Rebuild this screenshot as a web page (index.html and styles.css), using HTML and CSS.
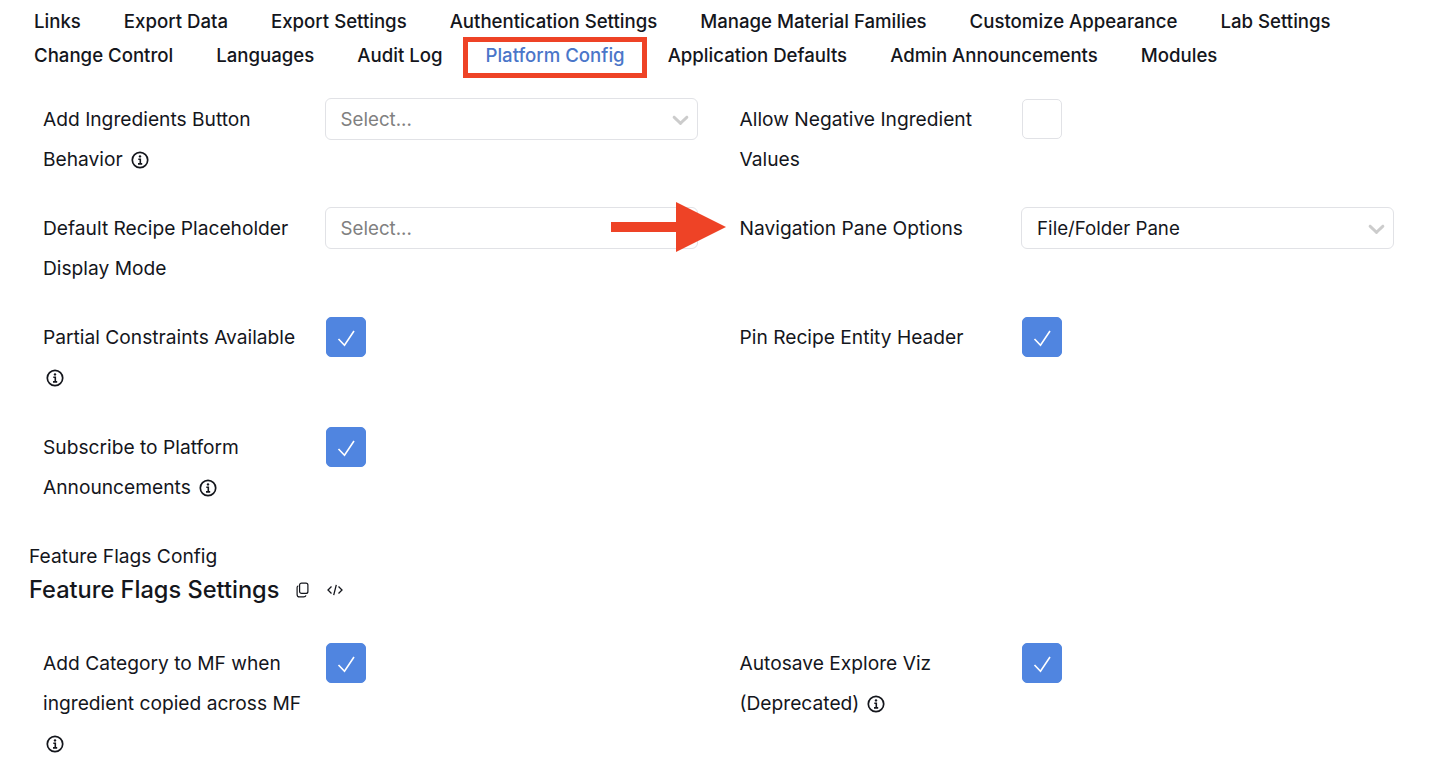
FILE: index.html
```html
<!DOCTYPE html>
<html lang="en">
<head>
  <meta charset="UTF-8" />
  <meta name="viewport" content="width=device-width, initial-scale=1" />
  <title>Platform Config</title>
  <link rel="stylesheet" href="styles.css">
</head>
<body>

<svg width="0" height="0" class="defs">
  <symbol id="info" viewBox="0 0 18 18">
    <circle cx="9" cy="9" r="7.7" fill="none" stroke="currentColor" stroke-width="1.7" />
    <circle cx="9" cy="5.4" r="1.2" fill="currentColor" />
    <path d="M7.3 8.2H9.3V12.6M7 12.9H11.2" fill="none" stroke="currentColor" stroke-width="1.6" />
  </symbol>
  <symbol id="chevron" viewBox="0 0 20 20">
    <path d="M4.516 7.548c.436-.446 1.043-.481 1.576 0L10 11.295l3.908-3.747c.533-.481 1.141-.446 1.574 0 .436.445.408 1.197 0 1.615-.406.418-4.695 4.502-4.695 4.502a1.095 1.095 0 0 1-1.576 0S4.924 9.581 4.516 9.163c-.409-.418-.436-1.17 0-1.615z" fill="currentColor" />
  </symbol>
  <symbol id="tick" viewBox="0 0 38 38">
    <path d="M11.5 21L17.5 27.3L27 13" fill="none" stroke="#fff" stroke-width="1.6" />
  </symbol>
</svg>

<!-- Admin tabs -->
<nav class="tabs">
  <a class="tab">Links</a>
  <a class="tab">Export Data</a>
  <a class="tab">Export Settings</a>
  <a class="tab">Authentication Settings</a>
  <a class="tab">Manage Material Families</a>
  <a class="tab">Customize Appearance</a>
  <a class="tab">Lab Settings</a>
  <a class="tab">Change Control</a>
  <a class="tab">Languages</a>
  <a class="tab">Audit Log</a>
  <a class="tab tab-active">Platform Config<span class="highlight"></span></a>
  <a class="tab">Application Defaults</a>
  <a class="tab">Admin Announcements</a>
  <a class="tab">Modules</a>
</nav>

<!-- Platform settings -->
<section class="settings">
  <div class="field">
    <label class="field-label">Add Ingredients Button Behavior <svg class="info"><use href="#info" /></svg></label>
    <div class="select placeholder">Select...<svg class="chevron"><use href="#chevron" /></svg></div>
  </div>
  <div class="field">
    <label class="field-label">Allow Negative Ingredient Values</label>
    <div class="checkbox"></div>
  </div>
  <div class="field">
    <label class="field-label">Default Recipe Placeholder Display Mode</label>
    <div class="select placeholder">Select...<svg class="chevron"><use href="#chevron" /></svg></div>
  </div>
  <div class="field">
    <label class="field-label">Navigation Pane Options</label>
    <div class="select">File/Folder Pane<svg class="chevron"><use href="#chevron" /></svg></div>
  </div>
  <div class="field">
    <label class="field-label">Partial Constraints Available <svg class="info"><use href="#info" /></svg></label>
    <div class="checkbox checked"><svg><use href="#tick" /></svg></div>
  </div>
  <div class="field">
    <label class="field-label">Pin Recipe Entity Header</label>
    <div class="checkbox checked"><svg><use href="#tick" /></svg></div>
  </div>
  <div class="field">
    <label class="field-label">Subscribe to Platform Announcements <svg class="info"><use href="#info" /></svg></label>
    <div class="checkbox checked"><svg><use href="#tick" /></svg></div>
  </div>
</section>

<!-- Feature flags -->
<section class="flags">
  <div class="flags-kicker">Feature Flags Config</div>
  <div class="flags-title">
    <h2>Feature Flags Settings</h2>
    <svg class="icon-copy" viewBox="0 0 13 16">
      <rect x="3.6" y="1.1" width="8.3" height="10.3" rx="2" fill="none" stroke="currentColor" stroke-width="1.2" />
      <path d="M2.3 3.8C1.5 4.1 1.1 4.8 1.1 5.6V12.4C1.1 13.9 2 14.9 3.5 14.9H7.7C8.9 14.9 9.7 14.3 10 13.4" fill="none" stroke="currentColor" stroke-width="1.2" />
    </svg>
    <svg class="icon-code" viewBox="0 0 16 16">
      <path d="M4.5 4.5L1 8L4.5 11.5M11.5 4.5L15 8L11.5 11.5M9.3 2.8L6.7 13.2" fill="none" stroke="currentColor" stroke-width="1.3" />
    </svg>
  </div>
</section>

<section class="settings settings-flags">
  <div class="field">
    <label class="field-label">Add Category to MF when ingredient copied across MF <svg class="info"><use href="#info" /></svg></label>
    <div class="checkbox checked"><svg><use href="#tick" /></svg></div>
  </div>
  <div class="field">
    <label class="field-label">Autosave Explore Viz (Deprecated) <svg class="info"><use href="#info" /></svg></label>
    <div class="checkbox checked"><svg><use href="#tick" /></svg></div>
  </div>
</section>

<!-- Red annotation arrow -->
<svg class="arrow" width="116" height="50" viewBox="0 0 116 50">
  <path d="M0 20H65V0L115 25L65 50V30H0Z" fill="#ee4326" />
</svg>

</body>
</html>
```

FILE: styles.css
```css
html, body {
  margin: 0;
  padding: 0;
  height: 760px;
  overflow: hidden;
}

body {
  font-family: Inter, "Noto Sans", sans-serif;
  font-size: 19.2px;
  color: #14161c;
  background: #fff;
  position: relative;
}

.defs {
  position: absolute;
}

.tabs {
  display: flex;
  flex-wrap: wrap;
  width: 1340px;
  padding: 4px 0 0 34px;
  column-gap: 43px;
  font-size: 18.63px;
}
.tab {
  position: relative;
  font-weight: 500;
  line-height: 34px;
  color: #14161c;
}
.tab-active {
  color: #4a76c9;
}
.highlight {
  position: absolute;
  left: -22.5px;
  right: -22.5px;
  top: -1px;
  bottom: -6px;
  border: 5px solid #ee4326;
}

.settings {
  display: grid;
  grid-template-columns: 654.5px 654px;
  column-gap: 42px;
  padding: 27px 0 0 43px;
}
.settings-flags {
  padding-top: 36px;
}
.field {
  display: flex;
  align-items: flex-start;
  min-height: 109.2px;
}
.field-label {
  width: 281.7px;
  flex: none;
  line-height: 40px;
  padding-right: 20px;
  box-sizing: border-box;
}

.info {
  width: 18px;
  height: 18px;
  vertical-align: -3px;
  margin-left: 2.5px;
}

.select {
  width: 373px;
  height: 42px;
  margin-top: -1px;
  box-sizing: border-box;
  border: 1px solid #e1e2e6;
  border-radius: 6px;
  padding: 0 15px 0 14.9px;
  display: flex;
  align-items: center;
  justify-content: space-between;
  font-size: 18.7px;
  background: #fff;
}
.placeholder {
  color: #808080;
}
.chevron {
  width: 27px;
  height: 27px;
  color: #ccc;
  margin-right: -12px;
}

.checkbox {
  width: 40px;
  height: 40px;
  box-sizing: border-box;
  margin: 0 0 0 1px;
  border: 1px solid #e1e2e6;
  border-radius: 5px;
}
.checkbox.checked {
  background: #5085e0;
  border-color: #5085e0;
}
.checkbox svg {
  display: block;
  width: 38px;
  height: 38px;
}

.flags {
  padding: 3.4px 0 0 29px;
}
.flags-kicker {
  line-height: 34px;
}
.flags-title {
  display: flex;
  align-items: center;
  height: 34px;
}
.flags-title h2 {
  margin: -1px 16.5px 0 0;
  font-size: 23.6px;
  font-weight: 500;
}
.icon-copy {
  width: 13px;
  height: 16px;
  margin-right: 18px;
}
.icon-code {
  width: 16px;
  height: 16px;
}

.arrow {
  position: absolute;
  left: 611px;
  top: 202px;
}
```
